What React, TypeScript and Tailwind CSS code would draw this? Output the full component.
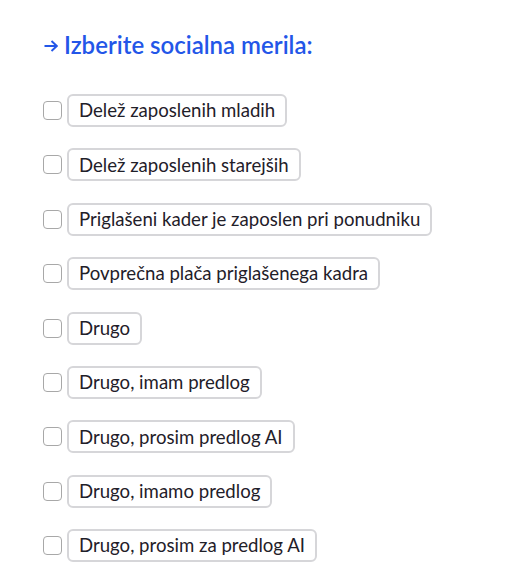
const options = [
  "Delež zaposlenih mladih",
  "Delež zaposlenih starejših",
  "Priglašeni kader je zaposlen pri ponudniku",
  "Povprečna plača priglašenega kadra",
  "Drugo",
  "Drugo, imam predlog",
  "Drugo, prosim predlog AI",
  "Drugo, imamo predlog",
  "Drugo, prosim za predlog AI",
];

function OptionRow({ label }: { label: string }) {
  return (
    <label className="flex items-center gap-[5px] h-[33px] cursor-pointer">
      <input
        type="checkbox"
        className="appearance-none w-[19px] h-[19px] rounded-[4px] border border-[#a8a8a8] bg-white shrink-0"
      />
      <span className="h-[33px] flex items-center px-[10px] rounded-[6px] border-2 border-[#d6d6d9] text-[18.6px] text-[#1f2029] leading-none">
        {label}
      </span>
    </label>
  );
}

export default function App() {
  return (
    <div
      className="bg-white w-[516px] h-[588px] pl-[44px] pt-[30px]"
      style={{ fontFamily: "Lato, 'Noto Sans', sans-serif" }}
    >
      <h2 className="text-[24px] font-semibold text-[#2356e8] leading-[30px] flex items-center">
        {/* small arrow before the heading */}
        <svg width="14" height="12" viewBox="0 0 14 12" fill="none" className="mr-[6px] mt-[2px] shrink-0">
          <path d="M0.5 6H12.5M7.5 1L12.8 6L7.5 11" stroke="currentColor" strokeWidth="1.9" />
        </svg>
        Izberite socialna merila:
      </h2>
      <div className="mt-[34px] -ml-px flex flex-col gap-[21.4px]">
        {options.map((o) => (
          <OptionRow key={o} label={o} />
        ))}
      </div>
    </div>
  );
}
